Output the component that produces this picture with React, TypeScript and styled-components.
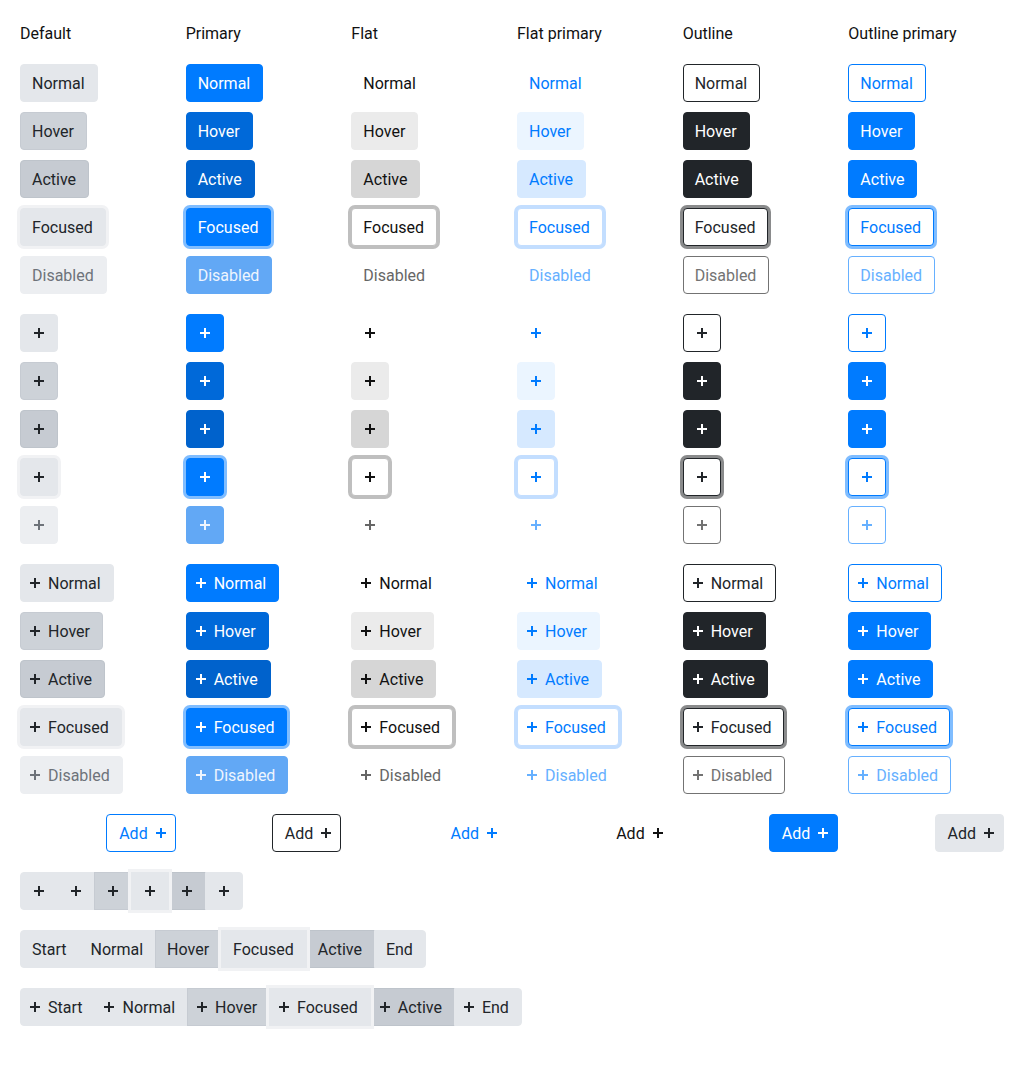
import React from "react";
import styled, { createGlobalStyle, css } from "styled-components";

type Variant = "default" | "primary" | "flat" | "flatPrimary" | "outline" | "outlinePrimary";
type State = "normal" | "hover" | "active" | "focus" | "disabled";
type IconPos = "none" | "start" | "end" | "only";

interface Look {
  bg: string;
  border: string;
  color: string;
  ring?: string;
}

const looks: Record<Variant, Record<State, Look>> = {
  default: {
    normal: { bg: "#e4e7eb", border: "#e4e7eb", color: "#212529" },
    hover: { bg: "#cdd2d8", border: "#c6cbd2", color: "#212529" },
    active: { bg: "#c6cbd2", border: "#bec4cb", color: "#212529" },
    focus: { bg: "#e4e7eb", border: "#e4e7eb", color: "#212529", ring: "#f1f2f4" },
    disabled: { bg: "#eceef1", border: "#eceef1", color: "#6e737a" },
  },
  primary: {
    normal: { bg: "#007bff", border: "#007bff", color: "#ffffff" },
    hover: { bg: "#0069d9", border: "#0069d9", color: "#ffffff" },
    active: { bg: "#0062cc", border: "#0062cc", color: "#ffffff" },
    focus: { bg: "#007bff", border: "#007bff", color: "#ffffff", ring: "#80bdff" },
    disabled: { bg: "#62a8f5", border: "#62a8f5", color: "#eef5fe" },
  },
  flat: {
    normal: { bg: "transparent", border: "transparent", color: "#111111" },
    hover: { bg: "#ebebeb", border: "#ebebeb", color: "#111111" },
    active: { bg: "#d6d6d6", border: "#d6d6d6", color: "#111111" },
    focus: { bg: "#ffffff", border: "#bfbfbf", color: "#111111", ring: "#bfbfbf" },
    disabled: { bg: "transparent", border: "transparent", color: "#666666" },
  },
  flatPrimary: {
    normal: { bg: "transparent", border: "transparent", color: "#007bff" },
    hover: { bg: "#ebf5ff", border: "#ebf5ff", color: "#007bff" },
    active: { bg: "#d6e9ff", border: "#d6e9ff", color: "#007bff" },
    focus: { bg: "#ffffff", border: "#c3deff", color: "#007bff", ring: "#c3deff" },
    disabled: { bg: "transparent", border: "transparent", color: "#66b0ff" },
  },
  outline: {
    normal: { bg: "#ffffff", border: "#212529", color: "#212529" },
    hover: { bg: "#212529", border: "#212529", color: "#ffffff" },
    active: { bg: "#212529", border: "#212529", color: "#ffffff" },
    focus: { bg: "#ffffff", border: "#212529", color: "#212529", ring: "#8a8b8c" },
    disabled: { bg: "#ffffff", border: "#737373", color: "#737373" },
  },
  outlinePrimary: {
    normal: { bg: "#ffffff", border: "#007bff", color: "#007bff" },
    hover: { bg: "#007bff", border: "#007bff", color: "#ffffff" },
    active: { bg: "#007bff", border: "#007bff", color: "#ffffff" },
    focus: { bg: "#ffffff", border: "#007bff", color: "#007bff", ring: "#80bdff" },
    disabled: { bg: "#ffffff", border: "#66b0ff", color: "#66b0ff" },
  },
};

const GlobalStyle = createGlobalStyle`
  html, body {
    margin: 0;
    padding: 0;
    background: #ffffff;
    font-family: Roboto, "Liberation Sans", Arial, sans-serif;
    font-size: 16px;
    color: #212529;
  }
`;

const Page = styled.main`
  box-sizing: border-box;
  width: 1024px;
  padding: 20px;
  display: flex;
  flex-direction: column;
  gap: 20px;
`;

const Grid = styled.div<{ $align?: "start" | "end" }>`
  display: grid;
  grid-template-columns: repeat(6, 1fr);
  column-gap: 10px;
  row-gap: 10px;
  justify-items: ${(p) => p.$align ?? "start"};
  align-items: start;
`;

const Heading = styled.div`
  box-sizing: border-box;
  height: 24px;
  padding-top: 2px;
  font-size: 16px;
  line-height: 24px;
  color: #111111;
`;

const Button = styled.button<{ $variant: Variant; $state: State; $icon: IconPos }>`
  box-sizing: border-box;
  display: inline-flex;
  align-items: center;
  justify-content: center;
  gap: 8px;
  height: 38px;
  margin: 0;
  padding: 0 12px 0 11px;
  border-radius: 4px;
  font-family: Roboto, "Liberation Sans", Arial, sans-serif;
  font-size: 16px;
  font-weight: 400;
  line-height: 1;
  white-space: nowrap;
  cursor: pointer;
  outline: none;
  position: relative;
  ${(p) => {
    const l = looks[p.$variant][p.$state];
    return css`
      background: ${l.bg};
      border: 1px solid ${l.border};
      color: ${l.color};
      box-shadow: ${l.ring ? `0 0 0 3px ${l.ring}` : "none"};
      z-index: ${l.ring ? 1 : 0};
    `;
  }}
  ${(p) => p.$state === "disabled" && css`cursor: default;`}
  ${(p) =>
    p.$icon === "start" &&
    css`
      padding: 0 12px 0 9px;
    `}
  ${(p) =>
    p.$icon === "end" &&
    css`
      padding: 0 9px 0 12px;
    `}
  ${(p) =>
    p.$icon === "only" &&
    css`
      width: 38px;
      padding: 0;
    `}
`;

const Label = styled.span`
  display: block;
  padding-top: 2px;
`;

const PlusSvg = styled.svg`
  display: block;
  flex: none;
  width: 10px;
  height: 10px;
`;

const Group = styled.div`
  display: flex;
  align-self: flex-start;

  & > button:not(:first-child) {
    margin-left: -1px;
    border-top-left-radius: 0;
    border-bottom-left-radius: 0;
  }
  & > button:not(:last-child) {
    border-top-right-radius: 0;
    border-bottom-right-radius: 0;
  }
`;

const Plus = () => (
  <PlusSvg viewBox="0 0 10 10" aria-hidden="true">
    <path d="M5 0V10M0 5H10" stroke="currentColor" strokeWidth="2" fill="none" />
  </PlusSvg>
);

interface BtnProps {
  variant: Variant;
  state: State;
  label?: string;
  icon?: IconPos;
}

const Btn = ({ variant, state, label, icon = "none" }: BtnProps) => (
  <Button $variant={variant} $state={state} $icon={icon} disabled={state === "disabled"} type="button">
    {(icon === "start" || icon === "only") && <Plus />}
    {label && <Label>{label}</Label>}
    {icon === "end" && <Plus />}
  </Button>
);

const variants: { key: Variant; title: string }[] = [
  { key: "default", title: "Default" },
  { key: "primary", title: "Primary" },
  { key: "flat", title: "Flat" },
  { key: "flatPrimary", title: "Flat primary" },
  { key: "outline", title: "Outline" },
  { key: "outlinePrimary", title: "Outline primary" },
];

const states: { key: State; label: string }[] = [
  { key: "normal", label: "Normal" },
  { key: "hover", label: "Hover" },
  { key: "active", label: "Active" },
  { key: "focus", label: "Focused" },
  { key: "disabled", label: "Disabled" },
];

const addOrder: Variant[] = ["outlinePrimary", "outline", "flatPrimary", "flat", "primary", "default"];

const groupStates: { key: State; label: string }[] = [
  { key: "normal", label: "Start" },
  { key: "normal", label: "Normal" },
  { key: "hover", label: "Hover" },
  { key: "focus", label: "Focused" },
  { key: "active", label: "Active" },
  { key: "normal", label: "End" },
];

const iconGroupStates: State[] = ["normal", "normal", "hover", "focus", "active", "normal"];

export default function App() {
  return (
    <>
      <GlobalStyle />
      <Page>
        <Grid>
          {variants.map((v) => (
            <Heading key={v.key}>{v.title}</Heading>
          ))}
        </Grid>

        <Grid>
          {states.map((s) =>
            variants.map((v) => <Btn key={`${s.key}-${v.key}`} variant={v.key} state={s.key} label={s.label} />)
          )}
        </Grid>

        <Grid>
          {states.map((s) =>
            variants.map((v) => <Btn key={`${s.key}-${v.key}`} variant={v.key} state={s.key} icon="only" />)
          )}
        </Grid>

        <Grid>
          {states.map((s) =>
            variants.map((v) => (
              <Btn key={`${s.key}-${v.key}`} variant={v.key} state={s.key} label={s.label} icon="start" />
            ))
          )}
        </Grid>

        <Grid $align="end">
          {addOrder.map((v) => (
            <Btn key={v} variant={v} state="normal" label="Add" icon="end" />
          ))}
        </Grid>

        <Group>
          {iconGroupStates.map((s, i) => (
            <Btn key={i} variant="default" state={s} icon="only" />
          ))}
        </Group>

        <Group>
          {groupStates.map((s, i) => (
            <Btn key={i} variant="default" state={s.key} label={s.label} />
          ))}
        </Group>

        <Group>
          {groupStates.map((s, i) => (
            <Btn key={i} variant="default" state={s.key} label={s.label} icon="start" />
          ))}
        </Group>
      </Page>
    </>
  );
}
